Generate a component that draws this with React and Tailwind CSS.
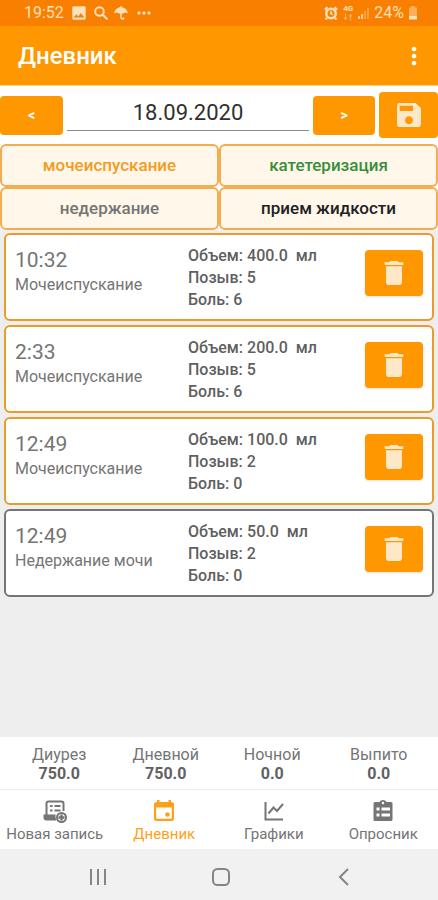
import React, { useState } from 'react';
import { MdSave, MdDelete, MdMoreVert, MdImage, MdMoreHoriz } from 'react-icons/md';

const FILTERS = [
  { name: 'мочеиспускание', color: 'text-[#f39c1f]' },
  { name: 'катетеризация', color: 'text-[#388e3c]' },
  { name: 'недержание', color: 'text-[#757575]' },
  { name: 'прием жидкости', color: 'text-[#212121]' }
];

const RECORDS = [
  { id: 1, time: '10:32', type: 'Мочеиспускание', volume: '400.0', urge: 5, pain: 6, border: 'border-[#e99b2c]' },
  { id: 2, time: '2:33', type: 'Мочеиспускание', volume: '200.0', urge: 5, pain: 6, border: 'border-[#e99b2c]' },
  { id: 3, time: '12:49', type: 'Мочеиспускание', volume: '100.0', urge: 2, pain: 0, border: 'border-[#e99b2c]' },
  { id: 4, time: '12:49', type: 'Недержание мочи', volume: '50.0', urge: 2, pain: 0, border: 'border-[#757575]' }
];

const TOTALS = [
  { label: 'Диурез', value: '750.0' },
  { label: 'Дневной', value: '750.0' },
  { label: 'Ночной', value: '0.0' },
  { label: 'Выпито', value: '0.0' }
];

const SearchIcon = () => (
  <svg viewBox="0 0 14 14" className="size-3.5" fill="none" stroke="currentColor" strokeWidth="2">
    <circle cx="5.500" cy="5.500" r="4.300" />
    <path d="m8.500 8.500 5 5" />
  </svg>
);

const UmbrellaIcon = () => (
  <svg viewBox="0 0 14 14" className="size-3.5" fill="none">
    <path d="M.3 7.500C.5 3.700 3.300 1.300 7 1.300S13.500 3.700 13.700 7.500L11.500 6.500 9 7.500H5L2.500 6.500Z" fill="currentColor" />
    <path d="M7 .3v11q0 1.600 1.400 1.600T9.800 11.500" stroke="currentColor" strokeWidth="1.600" />
  </svg>
);

const AlarmIcon = () => (
  <svg viewBox="0 0 14 14" className="size-3.5" fill="none">
    <circle cx="7" cy="7.500" r="6" fill="currentColor" />
    <path d="M.8 3.800 3.500 1.200M13.200 3.800 10.500 1.200M3 12l-1.500 1.500M11 12l1.500 1.500" stroke="currentColor" strokeWidth="2.200" />
    <circle cx="7" cy="7.500" r="3.500" fill="#f97f00" />
    <path d="M7 5v2.700l1.800 1" stroke="currentColor" strokeWidth="1.500" />
  </svg>
);

const NetworkIcon = () => (
  <svg viewBox="0 0 12 7" className="h-2 w-3" fill="currentColor" opacity=".5">
    <path d="M4 0v4h1.500L3.500 7l-2-3H3V0ZM8 7V3H6.500l2-3 2 3H9v4Z" />
  </svg>
);

const SignalIcon = () => (
  <svg viewBox="0 0 12 14" className="h-3.5 w-3" fill="currentColor">
    <path d="M0 10h2v3H0ZM3 8h2v5H3Z" opacity=".8" />
    <path d="M6 5h2v8H6ZM9 2h2v11H9Z" opacity=".35" />
  </svg>
);

const BatteryIcon = () => (
  <svg viewBox="0 0 10 14" className="h-3.5 w-2.5" fill="currentColor">
    <path d="M3 0h4v1.500h2V10H1V1.500h2Z" opacity=".5" />
    <path d="M1 10h8v3.500H1Z" />
  </svg>
);

const NewRecordIcon = () => (
  <svg viewBox="0 0 24 24" className="size-6" fill="none">
    <path d="M3.500 16V4.500Q3.500 2.500 5.500 2.500H18.500Q20.500 2.500 20.500 4.500V12" stroke="currentColor" strokeWidth="2" />
    <path d="M.5 15.500h12v3l1 3H3.500q-3 0-3-3Z" fill="currentColor" />
    <path d="M7 7h2.500M11.500 7h6M7 11.500h2.500M11.500 11.500h6" stroke="currentColor" strokeWidth="2" />
    <circle cx="18.500" cy="18.500" r="4.500" fill="white" stroke="currentColor" strokeWidth="2" />
    <path d="M18.500 15.500v6M15.500 18.500h6" stroke="currentColor" strokeWidth="2.400" />
  </svg>
);

const DiaryIcon = () => (
  <svg viewBox="0 0 24 24" className="size-6" fill="currentColor" fillRule="evenodd">
    <path d="M5 1h2.500v2h9V1H19v2q3 0 3 2.500v14q0 2.500-2.500 2.500h-15Q2 22 2 19.500v-14Q2 3 5 3ZM4.200 8.500V19q0 .8.800.8h14q.8 0 .8-.8V8.500Z" />
    <circle cx="15.500" cy="15.500" r="2.300" />
  </svg>
);

const ChartIcon = () => (
  <svg viewBox="0 0 24 24" className="size-6" fill="none" stroke="currentColor" strokeWidth="2">
    <path d="M3.500 3v17.500H21" />
    <path d="m6.500 14.500 5-6 3.500 3.500 6-7" />
  </svg>
);

const SurveyIcon = () => (
  <svg viewBox="0 0 24 24" className="size-6" fill="currentColor" fillRule="evenodd">
    <path d="M4 3h4.500Q9.500 1 12 1t3.500 2H20q1.500 0 1.500 1.500v16Q21.500 22 20 22H4q-1.500 0-1.500-1.500v-16Q2.500 3 4 3ZM12 2.800a1.200 1.200 0 1 0 0 2.400 1.200 1.200 0 0 0 0-2.400ZM5.500 8.500v3h3v-3ZM10.500 8.500v3h8.500v-3ZM5.500 14.500v3h3v-3ZM10.500 14.500v3h8.500v-3Z" />
  </svg>
);

const TABS = [
  { name: 'Новая запись', Icon: NewRecordIcon },
  { name: 'Дневник', Icon: DiaryIcon },
  { name: 'Графики', Icon: ChartIcon },
  { name: 'Опросник', Icon: SurveyIcon }
];

const StatusBar = () => (
  <div className="flex h-[26px] items-center justify-between bg-[#f97f00] pr-5 pl-6 text-base text-[#ffe0b8]">
    <div className="flex items-center gap-1.5">
      <span>19:52</span>
      <MdImage className="size-[18px]" />
      <SearchIcon />
      <UmbrellaIcon />
      <MdMoreHoriz className="size-5" />
    </div>
    <div className="flex items-center gap-1">
      <AlarmIcon />
      <div className="flex flex-col items-center">
        <span className="text-[8px] leading-2 font-bold">4G</span>
        <NetworkIcon />
      </div>
      <SignalIcon />
      <span>24%</span>
      <BatteryIcon />
    </div>
  </div>
);

const RecordCard = ({ record, onDelete }) => (
  <li className={`flex h-[88px] rounded-md border-2 bg-white px-[9px] ${record.border}`}>
    <div className="flex-[172] pt-[11px] text-[#757575]">
      <p className="text-[21px] leading-7">{record.time}</p>
      <p className="text-base leading-[22px]">{record.type}</p>
    </div>
    <div className="flex-[176] pt-2.5 text-base leading-[22px] font-medium text-[#5f5f5f]">
      <p>Объем: {record.volume}&nbsp; мл</p>
      <p>Позыв: {record.urge}</p>
      <p>Боль: {record.pain}</p>
    </div>
    <button
      onClick={() => onDelete(record.id)}
      aria-label="Удалить"
      className="mt-[15px] flex h-[46px] w-[58px] shrink-0 items-center justify-center rounded-sm bg-[#ff9800] text-[#ffe8c8] shadow-sm"
    >
      <MdDelete className="size-8" />
    </button>
  </li>
);

const App = () => {
  const [records, setRecords] = useState(RECORDS);
  const [date, setDate] = useState('18.09.2020');
  const [activeTab, setActiveTab] = useState('Дневник');

  const handleDelete = (id) => setRecords(records.filter(r => r.id !== id));

  return (
    <div className="flex min-h-screen flex-col bg-[#eeeeee] font-['Roboto',sans-serif]">
      <StatusBar />

      <header className="flex h-[59px] items-center justify-between bg-[#ff9800] pr-2.5 pl-[18px] text-white">
        <h1 className="text-2xl font-medium">Дневник</h1>
        <button aria-label="Меню">
          <MdMoreVert className="size-7" />
        </button>
      </header>

      <div className="flex h-[59px] items-center gap-1 border-t border-[#ffcc80] bg-white">
        <button className="h-[39px] w-[63px] shrink-0 rounded-sm bg-[#ff9800] text-sm font-bold text-white">&lt;</button>
        <input
          type="text"
          aria-label="Дата"
          value={date}
          onChange={(e) => setDate(e.target.value)}
          className="h-8 min-w-0 flex-1 border-b border-[#8a8a8a] pb-1 text-center text-[22px] text-[#303030] outline-none"
        />
        <button className="h-[39px] w-[62px] shrink-0 rounded-sm bg-[#ff9800] text-sm font-bold text-white">&gt;</button>
        <button aria-label="Сохранить" className="flex h-[46px] w-[59px] shrink-0 items-center justify-center rounded-sm bg-[#ff9800] text-[#ffe8c8]">
          <MdSave className="size-8" />
        </button>
      </div>

      <div className="grid grid-cols-2 bg-white">
        {FILTERS.map(filter => (
          <button
            key={filter.name}
            className={`h-[43px] rounded-md border-2 border-[#f3ac50] bg-[#fff7ea] text-[17px] font-medium ${filter.color}`}
          >
            {filter.name}
          </button>
        ))}
      </div>

      <main className="flex-1 px-1 pt-[3px]">
        <ul className="flex flex-col gap-1">
          {records.map(record => (
            <RecordCard key={record.id} record={record} onDelete={handleDelete} />
          ))}
        </ul>
      </main>

      <dl className="grid h-[52px] grid-cols-4 bg-white px-1.5 pt-2 text-center text-[#757575]">
        {TOTALS.map(total => (
          <div key={total.label}>
            <dt className="text-base leading-5">{total.label}</dt>
            <dd className="text-base leading-[18px] font-bold text-[#616161]">{total.value}</dd>
          </div>
        ))}
      </dl>

      <nav className="grid h-[60px] grid-cols-4 border-t border-[#eeeeee] bg-white">
        {TABS.map(({ name, Icon }) => (
          <button
            key={name}
            onClick={() => setActiveTab(name)}
            className={`flex flex-col items-center pt-[9px] text-[15px] leading-[22px] whitespace-nowrap ${
              activeTab === name ? 'text-[#ff9f1a]' : 'text-[#757575]'
            }`}
          >
            <Icon />
            {name}
          </button>
        ))}
      </nav>

      <div className="flex h-[51px] items-center justify-between bg-[#f1f1f1] pt-1 pr-[84px] pl-[88px] text-[#858585]">
        <button aria-label="Недавние">
          <svg viewBox="0 0 20 20" className="size-5" fill="none" stroke="currentColor" strokeWidth="2">
            <path d="M3 2v16M10 2v16M17 2v16" />
          </svg>
        </button>
        <button aria-label="Домой">
          <svg viewBox="0 0 20 20" className="size-5" fill="none" stroke="currentColor" strokeWidth="2">
            <rect x="2" y="2" width="16" height="16" rx="4.500" />
          </svg>
        </button>
        <button aria-label="Назад">
          <svg viewBox="0 0 20 20" className="size-5" fill="none" stroke="currentColor" strokeWidth="2">
            <path d="m14 2-8 8 8 8" />
          </svg>
        </button>
      </div>
    </div>
  );
};

export default App;
